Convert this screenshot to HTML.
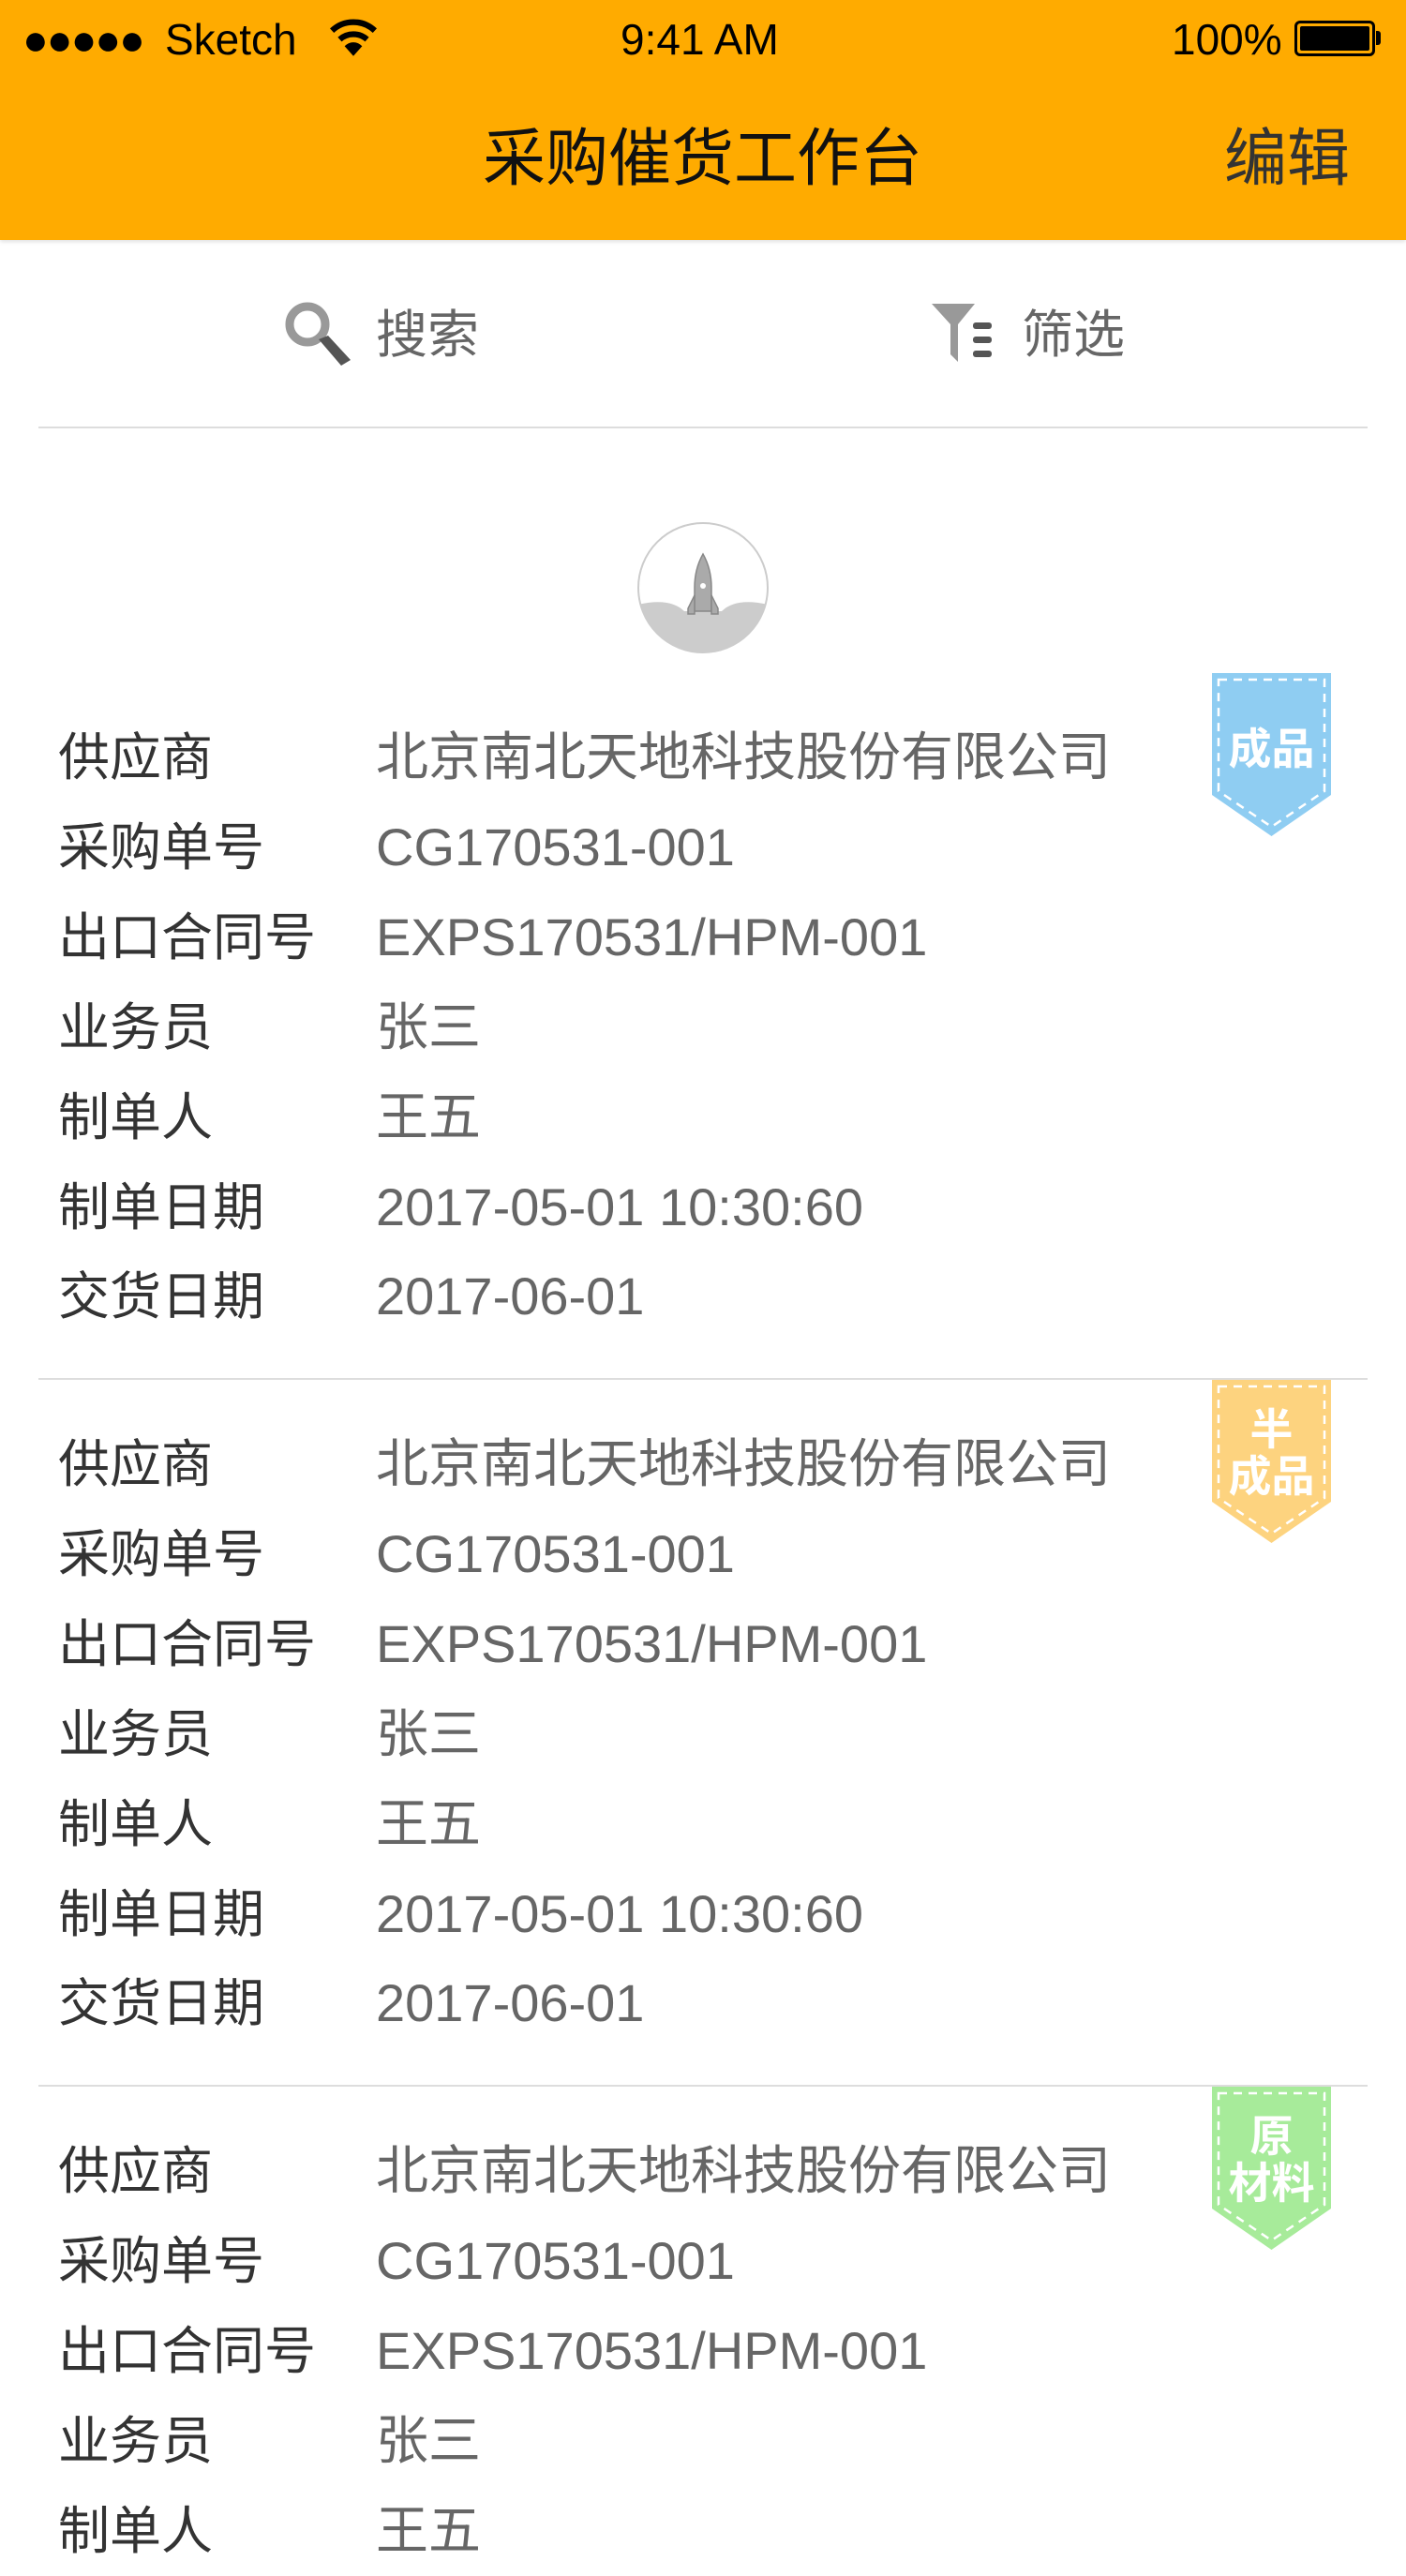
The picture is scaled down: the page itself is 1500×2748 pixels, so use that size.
<!DOCTYPE html>
<html><head><meta charset="utf-8"><style>
*{margin:0;padding:0;box-sizing:border-box}
body{width:1500px;height:2668px;overflow:hidden;background:#fff;position:relative;font-family:"Liberation Sans","Noto Sans CJK SC",sans-serif}
.a{position:absolute;white-space:nowrap}
.hdr{position:absolute;left:0;top:0;width:1500px;height:256px;background:#ffab00;box-shadow:0 2px 4px rgba(0,0,0,.12)}
.sb{font-size:46px;color:#000;line-height:84px;top:0}
.t{font-size:67px;color:#111;line-height:100px;top:120px}
.lab{font-size:55px;color:#333;left:62px;line-height:96px;height:96px}
.val{font-size:56px;color:#666;left:401px;line-height:96px;height:96px}
.hr{position:absolute;left:41px;width:1418px;height:2px;background:#ddd}
.bt{position:absolute;left:1293px;width:127px;text-align:center;color:#fff;font-size:46px;line-height:50px;font-weight:bold}
</style></head><body>
<div class="hdr"></div>
<div class="a sb" style="left:24px;letter-spacing:-2px">●●●●●</div>
<div class="a sb" style="left:176px">Sketch</div>
<svg class="a" style="left:350px;top:20px" width="54" height="42" viewBox="0 0 52 40"><path d="M4 12 A32 32 0 0 1 48 12" stroke="#000" stroke-width="6" fill="none"/><path d="M12 21 A21 21 0 0 1 40 21" stroke="#000" stroke-width="6" fill="none"/><path d="M26 38 L17 28 A12 12 0 0 1 35 28 Z" fill="#000"/></svg>
<div class="a sb" style="left:662px">9:41 AM</div>
<div class="a sb" style="left:1250px">100%</div>
<div class="a" style="left:1381px;top:22px;width:86px;height:38px;border:3px solid #000;border-radius:6px;padding:3px"><div style="width:100%;height:100%;background:#000;border-radius:2px"></div></div>
<div class="a" style="left:1468px;top:33px;width:5px;height:15px;background:#000;border-radius:0 3px 3px 0"></div>
<div class="a t" style="left:515px">采购催货工作台</div>
<div class="a t" style="left:1306px;color:#333">编辑</div>

<svg class="a" style="left:302px;top:320px" width="76" height="72" viewBox="0 0 76 72"><circle cx="26" cy="26" r="19" stroke="#999" stroke-width="9" fill="none"/><path d="M38 42 L48 38 L72 64 L62 70 Z" fill="#555"/></svg>
<div class="a" style="left:401px;top:322px;font-size:55px;color:#666;line-height:70px">搜索</div>
<svg class="a" style="left:994px;top:322px" width="72" height="66" viewBox="0 0 72 66"><path d="M0 2 H46 L28 24 V64 L20 56 V24 Z" fill="#999"/><rect x="44" y="22" width="20" height="7" rx="3" fill="#555"/><rect x="44" y="37" width="20" height="7" rx="3" fill="#555"/><rect x="44" y="52" width="20" height="7" rx="3" fill="#555"/></svg>
<div class="a" style="left:1090px;top:322px;font-size:55px;color:#666;line-height:70px">筛选</div>
<div class="hr" style="top:455px"></div>

<svg class="a" style="left:680px;top:557px" width="140" height="140" viewBox="0 0 140 140"><defs><clipPath id="c"><circle cx="70" cy="70" r="69"/></clipPath></defs><circle cx="70" cy="70" r="69" fill="#fff" stroke="#ccc" stroke-width="2"/><path d="M0 88 Q35 80 50 95 H90 Q105 80 140 88 V140 H0 Z" fill="#ccc" clip-path="url(#c)"/><path d="M70 34 Q79 50 79 70 V95 H61 V70 Q61 50 70 34 Z" fill="#aaa" stroke="#888" stroke-width="1.5"/><circle cx="70" cy="68" r="3" fill="#fff"/><path d="M61 78 L54 92 V98 H61 Z M79 78 L86 92 V98 H79 Z" fill="#aaa" stroke="#888" stroke-width="1.5"/></svg>

<svg class="a" style="left:1293px;top:718px" width="127" height="174" viewBox="0 0 127 174"><path d="M0 0 H127 V130 L63.5 174 L0 130 Z" fill="#8fcdf2"/><path d="M7 7 H120 V126 L63.5 164 L7 126 Z" fill="none" stroke="#fff" stroke-width="2.5" stroke-dasharray="9 7"/></svg>
<div class="bt" style="top:774px">成品</div>
<svg class="a" style="left:1293px;top:1472px" width="127" height="174" viewBox="0 0 127 174"><path d="M0 0 H127 V130 L63.5 174 L0 130 Z" fill="#fdd37f"/><path d="M7 7 H120 V126 L63.5 164 L7 126 Z" fill="none" stroke="#fff" stroke-width="2.5" stroke-dasharray="9 7"/></svg>
<div class="bt" style="top:1500px">半<br>成品</div>
<svg class="a" style="left:1293px;top:2226px" width="127" height="174" viewBox="0 0 127 174"><path d="M0 0 H127 V130 L63.5 174 L0 130 Z" fill="#a7eb9a"/><path d="M7 7 H120 V126 L63.5 164 L7 126 Z" fill="none" stroke="#fff" stroke-width="2.5" stroke-dasharray="9 7"/></svg>
<div class="bt" style="top:2254px">原<br>材料</div>

<div class="hr" style="top:1470px"></div>
<div class="hr" style="top:2224px"></div>

<div class="a lab" style="top:760px">供应商</div><div class="a val" style="top:760px">北京南北天地科技股份有限公司</div>
<div class="a lab" style="top:856px">采购单号</div><div class="a val" style="top:856px">CG170531-001</div>
<div class="a lab" style="top:952px">出口合同号</div><div class="a val" style="top:952px">EXPS170531/HPM-001</div>
<div class="a lab" style="top:1048px">业务员</div><div class="a val" style="top:1048px">张三</div>
<div class="a lab" style="top:1144px">制单人</div><div class="a val" style="top:1144px">王五</div>
<div class="a lab" style="top:1240px">制单日期</div><div class="a val" style="top:1240px">2017-05-01 10:30:60</div>
<div class="a lab" style="top:1335px">交货日期</div><div class="a val" style="top:1335px">2017-06-01</div>

<div class="a lab" style="top:1514px">供应商</div><div class="a val" style="top:1514px">北京南北天地科技股份有限公司</div>
<div class="a lab" style="top:1610px">采购单号</div><div class="a val" style="top:1610px">CG170531-001</div>
<div class="a lab" style="top:1706px">出口合同号</div><div class="a val" style="top:1706px">EXPS170531/HPM-001</div>
<div class="a lab" style="top:1802px">业务员</div><div class="a val" style="top:1802px">张三</div>
<div class="a lab" style="top:1898px">制单人</div><div class="a val" style="top:1898px">王五</div>
<div class="a lab" style="top:1994px">制单日期</div><div class="a val" style="top:1994px">2017-05-01 10:30:60</div>
<div class="a lab" style="top:2089px">交货日期</div><div class="a val" style="top:2089px">2017-06-01</div>

<div class="a lab" style="top:2268px">供应商</div><div class="a val" style="top:2268px">北京南北天地科技股份有限公司</div>
<div class="a lab" style="top:2364px">采购单号</div><div class="a val" style="top:2364px">CG170531-001</div>
<div class="a lab" style="top:2460px">出口合同号</div><div class="a val" style="top:2460px">EXPS170531/HPM-001</div>
<div class="a lab" style="top:2556px">业务员</div><div class="a val" style="top:2556px">张三</div>
<div class="a lab" style="top:2652px">制单人</div><div class="a val" style="top:2652px">王五</div>
</body></html>
